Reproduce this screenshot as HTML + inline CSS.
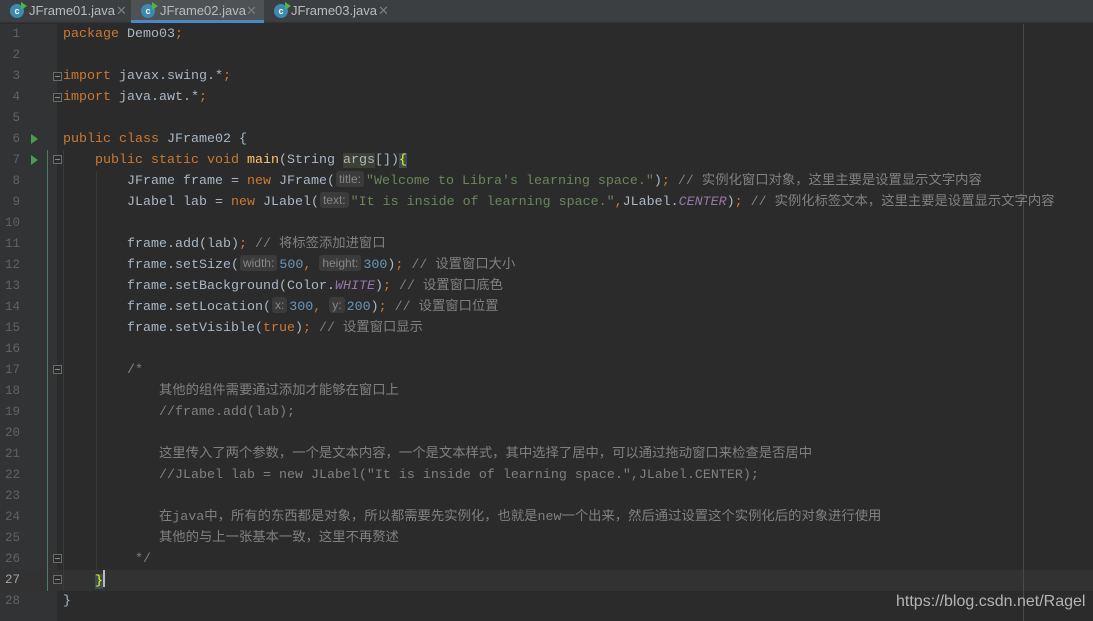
<!DOCTYPE html>
<html><head><meta charset="utf-8"><style>
*{margin:0;padding:0;box-sizing:border-box}
body{width:1093px;height:621px;background:#2b2b2b;overflow:hidden;position:relative;font-family:"Liberation Mono","Noto Sans CJK SC",monospace;font-size:13.33px;color:#a9b7c6}
.tabs{position:absolute;left:0;top:0;width:1093px;height:23px;background:#3c3f41;border-bottom:1px solid #323232}
.tab{position:absolute;top:0;height:23px;font-family:"Liberation Sans",sans-serif;font-size:13px;color:#bbbbbb;line-height:22px}
.tab .ic{position:absolute;left:10px;top:4px;width:14px;height:14px;border-radius:50%;background:#3d8ab0;color:#fff;font-size:9px;line-height:14px;text-align:center;font-weight:bold}
.tab .ic:after{content:"";position:absolute;right:-3px;top:-2px;border-left:6px solid #4ab54a;border-top:4px solid transparent;border-bottom:4px solid transparent}
.tab .x{position:absolute;color:#7a7d7f;font-size:13px}
.gutter{position:absolute;left:0;top:24px;width:57px;height:597px;background:#313335}
.ln{position:absolute;left:0;width:20px;text-align:right;color:#606366;font-size:12.5px;line-height:21px;height:21px}
.line{position:absolute;left:63px;height:21px;line-height:21px;white-space:pre}
.k{color:#cc7832}.s{color:#6a8759}.n{color:#6897bb}.c{color:#808080}.m{color:#ffc66d}.f{color:#9876aa;font-style:italic}
.h{display:inline-block;background:#3b3b3b;color:#878787;font-family:"Liberation Sans",sans-serif;font-size:12px;line-height:16px;height:16px;padding:0 3px;border-radius:3px;margin:0 2px 0 1px;vertical-align:1px}
.run{position:absolute;left:31px;border-left:7px solid #499c54;border-top:5px solid transparent;border-bottom:5px solid transparent}
.fold{position:absolute;left:53px;width:9px;height:9px;border:1px solid #6b6b6b;background:#2b2b2b}
.fold:after{content:"";position:absolute;left:1px;top:3px;width:5px;height:1px;background:#8a8a8a}
.guide{position:absolute;width:1px;background:#393939}
</style></head><body>
<div class="tabs">
 <div class="tab" style="left:0;width:131px"><span class="ic">c</span><span style="position:absolute;left:29px">JFrame01.java</span><span class="x" style="left:116px">✕</span></div>
 <div class="tab" style="left:131px;width:133px;background:#4e5254"><span class="ic">c</span><span style="position:absolute;left:29px">JFrame02.java</span><span class="x" style="left:115px">✕</span><div style="position:absolute;left:0;bottom:0;width:133px;height:3px;background:#4a88c7"></div></div>
 <div class="tab" style="left:264px;width:131px"><span class="ic">c</span><span style="position:absolute;left:27px">JFrame03.java</span><span class="x" style="left:114px">✕</span></div>
</div>
<div class="gutter"></div>
<div style="position:absolute;left:0;top:570px;width:1093px;height:21px;background:#323232"></div>
<div style="position:absolute;left:1023px;top:24px;width:1px;height:597px;background:#4a4a4a"></div>
<div style="position:absolute;left:47px;top:150px;width:1px;height:441px;background:#4d7a6a"></div>
<div class="guide" style="left:63px;top:150px;height:441px"></div>
<div class="guide" style="left:96px;top:171px;height:399px"></div>
<div class="run" style="top:134px"></div><div class="run" style="top:155px"></div>
<div class="fold" style="top:72px"></div><div class="fold" style="top:93px"></div>
<div class="fold" style="top:155px"></div><div class="fold" style="top:365px"></div>
<div class="fold" style="top:554px"></div><div class="fold" style="top:575px"></div>

<div class="ln" style="top:24px">1</div><div class="ln" style="top:45px">2</div><div class="ln" style="top:66px">3</div><div class="ln" style="top:87px">4</div><div class="ln" style="top:108px">5</div><div class="ln" style="top:129px">6</div><div class="ln" style="top:150px">7</div><div class="ln" style="top:171px">8</div><div class="ln" style="top:192px">9</div><div class="ln" style="top:213px">10</div><div class="ln" style="top:234px">11</div><div class="ln" style="top:255px">12</div><div class="ln" style="top:276px">13</div><div class="ln" style="top:297px">14</div><div class="ln" style="top:318px">15</div><div class="ln" style="top:339px">16</div><div class="ln" style="top:360px">17</div><div class="ln" style="top:381px">18</div><div class="ln" style="top:402px">19</div><div class="ln" style="top:423px">20</div><div class="ln" style="top:444px">21</div><div class="ln" style="top:465px">22</div><div class="ln" style="top:486px">23</div><div class="ln" style="top:507px">24</div><div class="ln" style="top:528px">25</div><div class="ln" style="top:549px">26</div><div class="ln" style="top:570px;color:#a4a3a3">27</div><div class="ln" style="top:591px">28</div>

<div class="line" style="top:24px"><span class="k">package</span> Demo03<span class="k">;</span></div>
<div class="line" style="top:66px"><span class="k">import</span> javax.swing.*<span class="k">;</span></div>
<div class="line" style="top:87px"><span class="k">import</span> java.awt.*<span class="k">;</span></div>
<div class="line" style="top:129px"><span class="k">public class</span> JFrame02 {</div>
<div class="line" style="top:150px">    <span class="k">public static void</span> <span class="m">main</span>(String <span style="background:#3f4034">args</span>[])<span style="color:#ffef28;background:#3b514d">{</span></div>
<div class="line" style="top:171px">        JFrame frame = <span class="k">new</span> JFrame(<span class="h">title:</span><span class="s">"Welcome to Libra's learning space."</span>)<span class="k">;</span> <span class="c">// 实例化窗口对象，这里主要是设置显示文字内容</span></div>
<div class="line" style="top:192px">        JLabel lab = <span class="k">new</span> JLabel(<span class="h">text:</span><span class="s">"It is inside of learning space."</span><span class="k">,</span>JLabel.<span class="f">CENTER</span>)<span class="k">;</span> <span class="c">// 实例化标签文本，这里主要是设置显示文字内容</span></div>
<div class="line" style="top:234px">        frame.add(lab)<span class="k">;</span> <span class="c">// 将标签添加进窗口</span></div>
<div class="line" style="top:255px">        frame.setSize(<span class="h">width:</span><span class="n">500</span><span class="k">,</span> <span class="h" style="margin-left:0">height:</span><span class="n">300</span>)<span class="k">;</span> <span class="c">// 设置窗口大小</span></div>
<div class="line" style="top:276px">        frame.setBackground(Color.<span class="f">WHITE</span>)<span class="k">;</span> <span class="c">// 设置窗口底色</span></div>
<div class="line" style="top:297px">        frame.setLocation(<span class="h">x:</span><span class="n">300</span><span class="k">,</span> <span class="h" style="margin-left:0">y:</span><span class="n">200</span>)<span class="k">;</span> <span class="c">// 设置窗口位置</span></div>
<div class="line" style="top:318px">        frame.setVisible(<span class="k">true</span>)<span class="k">;</span> <span class="c">// 设置窗口显示</span></div>
<div class="line c" style="top:360px">        /*</div>
<div class="line c" style="top:381px">            其他的组件需要通过添加才能够在窗口上</div>
<div class="line c" style="top:402px">            //frame.add(lab);</div>
<div class="line c" style="top:444px">            这里传入了两个参数，一个是文本内容，一个是文本样式，其中选择了居中，可以通过拖动窗口来检查是否居中</div>
<div class="line c" style="top:465px">            //JLabel lab = new JLabel("It is inside of learning space.",JLabel.CENTER);</div>
<div class="line c" style="top:507px">            在java中，所有的东西都是对象，所以都需要先实例化，也就是new一个出来，然后通过设置这个实例化后的对象进行使用</div>
<div class="line c" style="top:528px">            其他的与上一张基本一致，这里不再赘述</div>
<div class="line c" style="top:549px">         */</div>
<div class="line" style="top:570px">    <span style="color:#ffef28;background:#3b514d">}</span><span style="display:inline-block;width:2px;height:17px;background:#bbb;vertical-align:-3px"></span></div>
<div class="line" style="top:591px">}</div>
<div style="position:absolute;left:896px;top:591px;font-family:'Liberation Sans',sans-serif;font-size:16px;color:#b4b4b4;line-height:21px">https://blog.csdn.net/Ragel</div>
</body></html>
